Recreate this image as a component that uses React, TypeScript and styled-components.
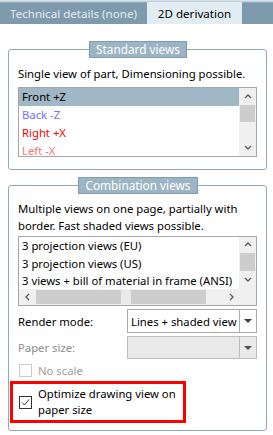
import React from "react";
import styled, { createGlobalStyle, css } from "styled-components";

const GlobalStyle = createGlobalStyle`
  html, body { margin: 0; padding: 0; background: #ffffff; }
  body {
    font-family: "Noto Sans", "Open Sans", sans-serif;
    font-size: 11.3px;
    color: #000;
    width: 273px;
    height: 435px;
    overflow: hidden;
  }
  * { box-sizing: border-box; }
`;

const Page = styled.div`
  width: 273px;
  height: 435px;
  background: #ffffff;
  display: flex;
  flex-direction: column;
`;

const TabBar = styled.div`
  height: 24px;
  display: flex;
  align-items: flex-end;
  background: linear-gradient(#d7e1e8 0, #d7e1e8 1px, #a8bccb 2px, #7e9bae 3px, #7e9bae 100%);
`;

const Tab = styled.div<{ $active?: boolean; $w: number }>`
  width: ${(p) => p.$w}px;
  height: 22px;
  display: flex;
  align-items: center;
  justify-content: center;
  font-size: 11.6px;
  ${(p) =>
    p.$active
      ? css`
          background: #e2edf3;
          color: #000;
        `
      : css`
          color: #e6edf1;
        `}
`;

const Content = styled.div`
  padding: 17px 6px 0 8px;
  display: flex;
  flex-direction: column;
  gap: 7px;
`;

const Group = styled.fieldset<{ $pt: number; $pb: number }>`
  margin: 0;
  border: 1px solid #8ea9bb;
  border-radius: 3px;
  padding: ${(p) => p.$pt}px 8px ${(p) => p.$pb}px 9px;
  min-width: 0;
  display: flex;
  flex-direction: column;
`;

const Legend = styled.legend`
  margin: 0 auto;
  padding: 0 6px;
  height: 17px;
  line-height: 15px;
  background: #9db4c5;
  border: 1px solid #7f9db2;
  color: #ffffff;
  font-size: 11.8px;
`;

const Desc = styled.div<{ $mb: number }>`
  line-height: 17px;
  margin-bottom: ${(p) => p.$mb}px;
  color: #000;
`;

const ListBox = styled.div<{ $hscroll?: boolean }>`
  width: 239px;
  height: 70px;
  border: 1px solid #a6a6a6;
  display: grid;
  grid-template-columns: 1fr 17px;
  grid-template-rows: ${(p) => (p.$hscroll ? "1fr 16px" : "1fr")};
  overflow: hidden;
  background: #fff;
`;

const Rows = styled.div`
  overflow: hidden;
  display: flex;
  flex-direction: column;
`;

const Row = styled.div<{ $color?: string; $selected?: boolean; $h: number }>`
  flex: 0 0 ${(p) => p.$h}px;
  line-height: ${(p) => p.$h}px;
  padding-left: 3px;
  white-space: nowrap;
  color: ${(p) => p.$color || "#000"};
  background: ${(p) => (p.$selected ? "#a0b8c6" : "transparent")};
`;

const VScroll = styled.div`
  background: #f0f0f0;
  display: flex;
  flex-direction: column;
`;

const ScrollBtn = styled.div<{ $size: number }>`
  flex: 0 0 ${(p) => p.$size}px;
  display: flex;
  align-items: center;
  justify-content: center;
`;

const VThumb = styled.div<{ $h: number }>`
  flex: 0 0 ${(p) => p.$h}px;
  margin: 0 1px;
  background: #cdcdcd;
`;

const Spacer = styled.div`
  flex: 1;
`;

const HScroll = styled.div`
  background: #f0f0f0;
  display: flex;
  align-items: stretch;
`;

const HThumb = styled.div`
  flex: 0 0 170px;
  margin: 1px 0;
  background: #cdcdcd;
  display: flex;
  justify-content: center;
  padding-left: 10px;
`;

const Grip = styled.div`
  width: 10px;
  background: #e9e9e9;
`;

const Corner = styled.div`
  background: #f0f0f0;
`;

const FieldRow = styled.div`
  display: flex;
  align-items: center;
  margin-top: 3px;
`;

const Label = styled.div<{ $disabled?: boolean }>`
  width: 109px;
  color: ${(p) => (p.$disabled ? "#8d8d8d" : "#000")};
`;

const Combo = styled.div<{ $disabled?: boolean; $h: number }>`
  width: 130px;
  height: ${(p) => p.$h}px;
  border: 1px solid ${(p) => (p.$disabled ? "#bcbcbc" : "#acacac")};
  background: ${(p) => (p.$disabled ? "#e9e9e9" : "#ffffff")};
  display: flex;
`;

const ComboText = styled.div`
  flex: 1;
  padding-left: 3px;
  display: flex;
  align-items: center;
  white-space: nowrap;
  overflow: hidden;
`;

const ComboBtn = styled.div<{ $disabled?: boolean }>`
  width: 17px;
  border-left: 1px solid ${(p) => (p.$disabled ? "#bcbcbc" : "#acacac")};
  display: flex;
  align-items: center;
  justify-content: center;
`;

const CheckRow = styled.label<{ $disabled?: boolean }>`
  display: flex;
  align-items: center;
  gap: 6px;
  padding-left: 1px;
  height: 22px;
  color: ${(p) => (p.$disabled ? "#a0a0a0" : "#000")};
`;

const Box = styled.span<{ $disabled?: boolean }>`
  flex: 0 0 13px;
  height: 13px;
  border: 1px solid ${(p) => (p.$disabled ? "#cacaca" : "#333333")};
  background: #fff;
  display: flex;
  align-items: center;
  justify-content: center;
`;

const Highlight = styled.div`
  margin-left: -8px;
  width: 176px;
  border: 3px solid #ff0000;
  padding: 2px 0 2px 6px;
  display: flex;
  align-items: center;
  gap: 6px;
`;

const HighlightText = styled.div`
  line-height: 16px;
`;

const Chevron = ({ dir }: { dir: "up" | "down" | "left" | "right" }) => {
  const pts: Record<string, string> = {
    up: "1,5 4,2 7,5",
    down: "1,2 4,5 7,2",
    left: "5,1 2,4 5,7",
    right: "3,1 6,4 3,7",
  };
  return (
    <svg width="8" height="8" viewBox="0 0 8 8">
      <polyline points={pts[dir]} fill="none" stroke="#606060" strokeWidth="1.4" />
    </svg>
  );
};

const Triangle = ({ color }: { color: string }) => (
  <svg width="8" height="4" viewBox="0 0 8 4">
    <polygon points="0,0 8,0 4,4" fill={color} />
  </svg>
);

const Check = () => (
  <svg width="11" height="11" viewBox="0 0 11 11">
    <polyline points="2,5.5 4.5,8 9,2.5" fill="none" stroke="#333" strokeWidth="1" />
  </svg>
);

const standardViews = [
  { t: "Front +Z", c: "#000", sel: true },
  { t: "Back -Z", c: "#6f6fff" },
  { t: "Right +X", c: "#ff0000" },
  { t: "Left -X", c: "#ff7171" },
];

const comboViews = [
  "3 projection views (EU)",
  "3 projection views (US)",
  "3 views + bill of material in frame (ANSI)",
];

export default function App() {
  return (
    <Page>
      <GlobalStyle />
      <TabBar>
        <Tab $w={147}>Technical details (none)</Tab>
        <Tab $w={95} $active>
          2D derivation
        </Tab>
      </TabBar>
      <Content>
        <Group $pt={7} $pb={12}>
          <Legend>Standard views</Legend>
          <Desc $mb={5}>Single view of part, Dimensioning possible.</Desc>
          <ListBox>
            <Rows>
              {standardViews.map((v) => (
                <Row key={v.t} $h={18} $color={v.c} $selected={v.sel}>
                  {v.t}
                </Row>
              ))}
            </Rows>
            <VScroll>
              <ScrollBtn $size={17}>
                <Chevron dir="up" />
              </ScrollBtn>
              <VThumb $h={17} />
              <Spacer />
              <ScrollBtn $size={17}>
                <Chevron dir="down" />
              </ScrollBtn>
            </VScroll>
          </ListBox>
        </Group>
        <Group $pt={6} $pb={7}>
          <Legend>Combination views</Legend>
          <Desc $mb={2}>
            Multiple views on one page, partially with border. Fast shaded views possible.
          </Desc>
          <ListBox $hscroll>
            <Rows>
              {comboViews.map((v) => (
                <Row key={v} $h={17.6}>
                  {v}
                </Row>
              ))}
            </Rows>
            <VScroll>
              <ScrollBtn $size={16}>
                <Chevron dir="up" />
              </ScrollBtn>
              <VThumb $h={18} />
              <ScrollBtn $size={18}>
                <Chevron dir="down" />
              </ScrollBtn>
            </VScroll>
            <HScroll>
              <ScrollBtn $size={17}>
                <Chevron dir="left" />
              </ScrollBtn>
              <HThumb>
                <Grip />
              </HThumb>
              <Spacer />
              <ScrollBtn $size={17}>
                <Chevron dir="right" />
              </ScrollBtn>
            </HScroll>
            <Corner />
          </ListBox>
          <FieldRow>
            <Label>Render mode:</Label>
            <Combo $h={24}>
              <ComboText>Lines + shaded view</ComboText>
              <ComboBtn>
                <Triangle color="#404040" />
              </ComboBtn>
            </Combo>
          </FieldRow>
          <FieldRow>
            <Label $disabled>Paper size:</Label>
            <Combo $h={23} $disabled>
              <ComboText />
              <ComboBtn $disabled>
                <Triangle color="#505050" />
              </ComboBtn>
            </Combo>
          </FieldRow>
          <CheckRow $disabled>
            <Box $disabled />
            No scale
          </CheckRow>
          <Highlight>
            <Box>
              <Check />
            </Box>
            <HighlightText>
              Optimize drawing view on
              <br />
              paper size
            </HighlightText>
          </Highlight>
        </Group>
      </Content>
    </Page>
  );
}
